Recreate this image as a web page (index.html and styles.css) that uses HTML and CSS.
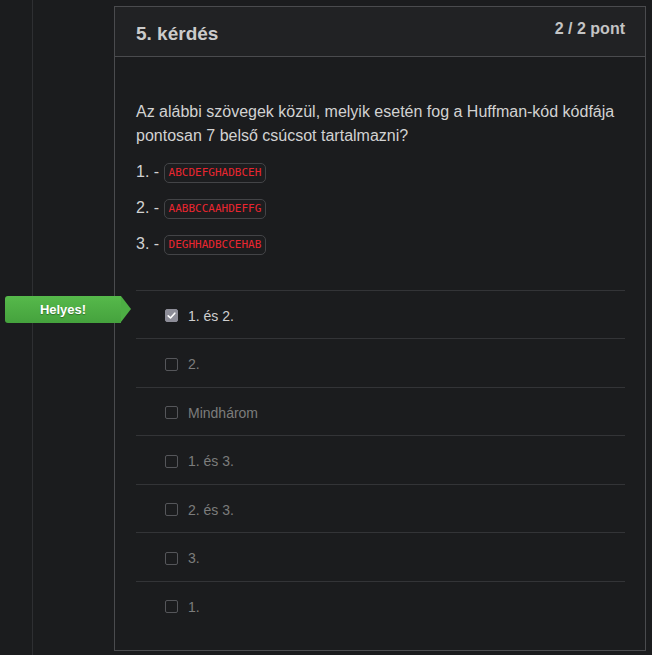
FILE: index.html
```html
<!DOCTYPE html>
<html lang="hu">
<head>
<meta charset="utf-8">
<link rel="stylesheet" href="styles.css">
</head>
<body>
<div class="page">
  <div class="rail"></div>
  <div class="spacer"></div>
  <div class="card">
    <div class="card-head">
      <h2 class="title">5. kérdés</h2>
      <div class="score">2 / 2 pont</div>
    </div>
    <div class="card-body">
      <p class="question">Az alábbi szövegek közül, melyik esetén fog a Huffman-kód kódfája pontosan 7 belső csúcsot tartalmazni?</p>
      <div class="item">1. - <code>ABCDEFGHADBCEH</code></div>
      <div class="item">2. - <code>AABBCCAAHDEFFG</code></div>
      <div class="item">3. - <code>DEGHHADBCCEHAB</code></div>
      <div class="options">
        <div class="opt checked"><span class="box"><svg viewBox="0 0 13 13" width="13" height="13"><path d="M3.2 6.8 L5.5 9 L9.8 4.2" fill="none" stroke="#fff" stroke-width="1.6" stroke-linecap="round" stroke-linejoin="round"/></svg></span><span class="label">1. és 2.</span>
          <div class="badge">Helyes!</div>
        </div>
        <div class="opt"><span class="box"></span><span class="label">2.</span></div>
        <div class="opt"><span class="box"></span><span class="label">Mindhárom</span></div>
        <div class="opt"><span class="box"></span><span class="label">1. és 3.</span></div>
        <div class="opt"><span class="box"></span><span class="label">2. és 3.</span></div>
        <div class="opt"><span class="box"></span><span class="label">3.</span></div>
        <div class="opt"><span class="box"></span><span class="label">1.</span></div>
      </div>
    </div>
  </div>
</div>
</body>
</html>
```
FILE: styles.css
```css
html, body {
  margin: 0;
  padding: 0;
  background: #1b1c1e;
  font-family: "Liberation Sans", Arial, sans-serif;
  color: #cfcfcf;
}
.page {
  display: flex;
  height: 655px;
  overflow: hidden;
}
.rail {
  width: 32px;
  border-right: 1px solid #2e2f32;
  flex: none;
}
.spacer {
  width: 81px;
  flex: none;
}
.card {
  margin-top: 6px;
  width: 532px;
  height: 645px;
  border: 1px solid #4a4b4e;
  flex: none;
  box-sizing: border-box;
}
.card-head {
  height: 49px;
  background: #212224;
  border-bottom: 1px solid #4a4b4e;
  display: flex;
  justify-content: space-between;
  padding: 0 20px 0 21px;
}
.title {
  margin: 0;
  font-size: 19px;
  font-weight: bold;
  color: #cbcbcb;
  line-height: 20px;
  padding-top: 17px;
}
.score {
  font-size: 16px;
  font-weight: bold;
  color: #c4c4c4;
  line-height: 20px;
  padding-top: 12px;
}
.card-body {
  padding: 43px 20px 20px 21px;
}
.question {
  margin: 0;
  font-size: 16px;
  line-height: 24px;
  color: #d2d2d2;
}
.item {
  margin-top: 12px;
  font-size: 16px;
  line-height: 24px;
  color: #d2d2d2;
}
code {
  display: inline-block;
  font-family: "DejaVu Sans Mono", monospace;
  font-size: 11px;
  line-height: 18px;
  padding: 0 4px;
  color: #ea2630;
  background: #1c1d1f;
  border: 1px solid #434447;
  border-radius: 5px;
  vertical-align: 1px;
}
.options {
  margin-top: 33.5px;
}
.opt {
  position: relative;
  border-top: 1px solid #333437;
  height: 47.5px;
  box-sizing: border-box;
  height: 48.5px;
  padding-top: 3px;
  display: flex;
  align-items: center;
  padding-left: 29px;
  font-size: 14px;
  color: #7c7c7c;
}
.box {
  width: 11px;
  height: 11px;
  border: 1px solid #55565a;
  border-radius: 2px;
  margin-right: 10px;
  display: inline-flex;
  position: relative;
}
.box svg {
  position: absolute;
  left: -1px;
  top: -1px;
}
.opt.checked .box {
  background: #8d8d98;
  border-color: #8d8d98;
}
.opt.checked .label {
  color: #cfcfcf;
}
.badge {
  position: absolute;
  left: -131px;
  top: 5px;
  width: 116px;
  height: 27px;
  line-height: 27px;
  text-align: center;
  font-size: 13px;
  font-weight: bold;
  color: #fff;
  background: linear-gradient(#56b94b, #45a23d);
  border-radius: 3px 0 0 3px;
  text-shadow: 0 1px 1px rgba(0,0,0,0.35);
}
.badge::after {
  content: "";
  position: absolute;
  right: -10px;
  top: 0;
  border-top: 13.5px solid transparent;
  border-bottom: 13.5px solid transparent;
  border-left: 10px solid #4dae44;
}
```
